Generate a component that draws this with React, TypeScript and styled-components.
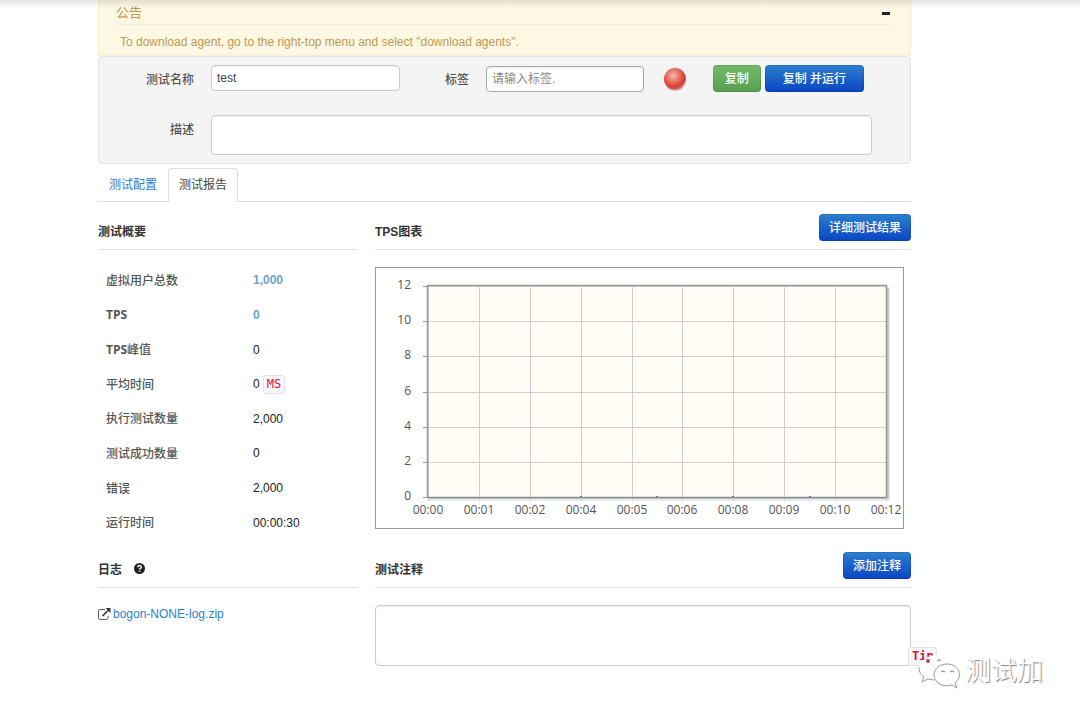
import React from "react";
import styled, { createGlobalStyle, css } from "styled-components";

const sans = `"Liberation Sans", "Noto Sans CJK SC", sans-serif`;
const humanist = `"Open Sans", "Noto Sans CJK SC", sans-serif`;

const GlobalStyle = createGlobalStyle`
  *, *::before, *::after { box-sizing: border-box; }
  body { margin: 0; background: #fff; color: #333; font: 12px/20px ${sans}; }
  button, input, textarea { font: inherit; }
`;

const Page = styled.div`
  position: relative;
  padding: 0 169px 32px 98px;
`;

const NavShadow = styled.div`
  position: absolute;
  inset: 0 0 auto;
  height: 8px;
  background: linear-gradient(rgba(0, 0, 0, 0.1), rgba(0, 0, 0, 0));
`;

const Notice = styled.section`
  padding: 2px 17px;
  height: 56px;
  background: #fcf8e3;
  border: 1px solid #fbeed5;
  border-width: 0 1px 1px;
  color: #c09853;
`;

const NoticeHead = styled.div`
  display: flex;
  align-items: center;
  justify-content: space-between;
  height: 23px;
  border-bottom: 1px solid #eee;
`;

const NoticeTitle = styled.h1`
  margin: 0;
  font-size: 13px;
  font-weight: 400;
`;

const Collapse = styled.button`
  display: flex;
  padding: 4px 3px 4px 4px;
  border: 0;
  background: none;
`;

const NoticeText = styled.p`
  margin: 7px 4px 0;
`;

const Well = styled.form`
  display: grid;
  row-gap: 23px;
  padding: 8px 38px 8px 12px;
  background: #f4f4f4;
  border: 1px solid #e3e3e3;
  border-radius: 4px;
`;

const FormRow = styled.div`
  display: flex;
  align-items: flex-start;
`;

const Label = styled.label<{ $width: number }>`
  flex: none;
  width: ${(p) => p.$width}px;
  padding-top: 5px;
  margin-right: 17px;
  color: #555;
  font-weight: 500;
  text-align: right;
`;

const field = css`
  min-width: 0;
  border: 1px solid #ccc;
  border-radius: 4px;
  background: #fff;
  color: #444;
  box-shadow: inset 0 1px 1px rgba(0, 0, 0, 0.07);
`;

const TextInput = styled.input<{ $grow: number; $dark?: boolean }>`
  ${field}
  flex: ${(p) => p.$grow} 1 0;
  height: 26px;
  padding: 0 5px;
  ${(p) => p.$dark && "border-color: #aaa; margin-top: 1px;"}
  &::placeholder { color: #888; opacity: 1; }
`;

const TextArea = styled.textarea<{ $height: number }>`
  ${field}
  display: block;
  flex: 1;
  width: 100%;
  height: ${(p) => p.$height}px;
  resize: none;
`;

const Ball = styled.svg`
  flex: none;
  margin: 2px 26px 0 19px;
`;

const Button = styled.button<{ $tone?: "green"; $pad?: number }>`
  flex: none;
  height: 27px;
  padding: 0 ${(p) => p.$pad ?? 9}px;
  border: 1px solid rgba(0, 0, 0, 0.1);
  border-radius: 4px;
  background: ${(p) =>
    p.$tone === "green"
      ? "linear-gradient(#74b96a, #57a04f)"
      : "linear-gradient(#2d7fcd, #0a45c4)"} border-box;
  color: #fff;
  font-weight: 500;
  white-space: nowrap;
`;

const Actions = styled.div`
  display: flex;
  flex: none;
  gap: 4px;
  margin-right: 8px;
`;

const Tabs = styled.nav`
  display: flex;
  margin-top: 4px;
  border-bottom: 1px solid #ddd;
`;

const Tab = styled.a<{ $active?: boolean }>`
  height: 33px;
  padding: 6px 10px;
  border-radius: 4px 4px 0 0;
  border: 1px solid transparent;
  border-bottom: 0;
  color: #2a7fc9;
  text-decoration: none;
  ${(p) =>
    p.$active &&
    css`
      height: 34px;
      margin-bottom: -1px;
      border-color: #ddd;
      background: #fff;
      color: #444;
    `}
`;

const Columns = styled.main`
  display: grid;
  grid-template-columns: minmax(0, 260fr) minmax(0, 536fr);
  column-gap: 17px;
`;

const Head = styled.header`
  display: flex;
  align-items: flex-end;
  height: 48px;
  border-bottom: 1px solid #e2e2e2;
  ${Button} { margin: 0 0 8px auto; }
`;

const Title = styled.h2`
  margin: 0 0 7px;
  font-size: 12px;
  font-weight: 700;
  line-height: 20px;
`;

const Help = styled.svg`
  margin: 0 0 13px 12px;
`;

const Summary = styled.table`
  width: 100%;
  height: 277px;
  margin-top: 13px;
  border-collapse: collapse;
  th {
    width: 155px;
    padding: 1px 0 0 8px;
    color: #555;
    font-family: ${humanist};
    font-weight: 500;
    text-align: left;
  }
  th b { font-weight: 700; }
  td { padding: 0; color: #222; }
`;

const Value = styled.span<{ $strong?: boolean }>`
  ${(p) => p.$strong && "color: #6aa5cb; font-weight: 700;"}
`;

const Code = styled.code`
  display: inline-block;
  margin-left: 3px;
  padding: 0 3px;
  border: 1px solid #e1e1e8;
  border-radius: 3px;
  background: #f7f7f9;
  color: #d14;
  font: 12px/17px "DejaVu Sans Mono", monospace;
`;

const Chart = styled.svg`
  display: block;
  width: calc(100% - 7px);
  margin-top: 17px;
  font: 12px ${humanist};
  fill: #555;
`;

const LogLink = styled.a`
  display: flex;
  align-items: center;
  gap: 2px;
  margin-top: 16px;
  color: #2a7fc9;
  text-decoration: none;
`;

const CommentBox = styled.div`
  position: relative;
  margin-top: 17px;
`;

const Tip = styled(Code)`
  position: absolute;
  right: -26px;
  bottom: 0;
  width: 29px;
  font-weight: 700;
`;

const Watermark = styled.div`
  position: absolute;
  left: calc(100% + 6px);
  top: 43px;
  display: flex;
  align-items: center;
  gap: 4px;
  color: #fff;
  font-size: 26px;
  font-weight: 300;
  line-height: 46px;
  white-space: nowrap;
  text-shadow: 1px 1px 1px #777;
`;

const rows: { label: React.ReactNode; value: string; strong?: boolean; unit?: string }[] = [
  { label: "虚拟用户总数", value: "1,000", strong: true },
  { label: <b>TPS</b>, value: "0", strong: true },
  { label: <><b>TPS</b>峰值</>, value: "0" },
  { label: "平均时间", value: "0", unit: "MS" },
  { label: "执行测试数量", value: "2,000" },
  { label: "测试成功数量", value: "0" },
  { label: "错误", value: "2,000" },
  { label: "运行时间", value: "00:00:30" },
];

const times = ["00:00", "00:01", "00:02", "00:04", "00:05", "00:06", "00:08", "00:09", "00:10", "00:12"];
const levels = [12, 10, 8, 6, 4, 2, 0];
const gridX = (i: number) => 53 + Math.round((i * 458) / 9);
const gridY = (i: number) => 19 + Math.round((i * 211) / 6);

function TpsChart() {
  return (
    <Chart viewBox="0 0 529 262" role="img" aria-label="TPS">
      <rect x="0.5" y="0.5" width="528" height="261" fill="#fff" stroke="#999" />
      <rect x="54" y="21" width="461" height="213" rx="1" fill="#000" opacity="0.08" />
      <rect x="54" y="20" width="460" height="212" rx="1" fill="#000" opacity="0.14" />
      <rect x="53" y="19" width="458" height="211" fill="#fffdf6" />
      {times.map((t, i) => (
        <g key={t}>
          <path d={`M${gridX(i) + 0.5} 19V234`} stroke="#d0d0d0" />
          <text x={gridX(i)} y="247" textAnchor="middle">{t}</text>
        </g>
      ))}
      {levels.map((n, i) => (
        <g key={n}>
          <path d={`M53 ${gridY(i) + 0.5}H511`} stroke="#d0d0d0" />
          <path d={`M48 ${gridY(i) + 0.5}H53`} stroke="#999" />
          <text x="36" y={gridY(i) + 3} textAnchor="end">{n}</text>
        </g>
      ))}
      <rect x="52.5" y="18.5" width="459" height="212" fill="none" stroke="#999" strokeWidth="1.5" />
      <path d="M53 230.5H511" stroke="#7e9097" />
      <path d="M205 229.5h2M281 229.5h2M357 229.5h2M434 229.5h2" stroke="#607a80" />
    </Chart>
  );
}

export default function App() {
  return (
    <Page>
      <GlobalStyle />
      <NavShadow />
      <Notice>
        <NoticeHead>
          <NoticeTitle>公告</NoticeTitle>
          <Collapse type="button" aria-label="Collapse">
            <svg width="8" height="3"><rect width="8" height="3" fill="#222" /></svg>
          </Collapse>
        </NoticeHead>
        <NoticeText>To download agent, go to the right-top menu and select "download agents".</NoticeText>
      </Notice>

      <Well onSubmit={(e) => e.preventDefault()}>
        <FormRow>
          <Label htmlFor="name" $width={83}>测试名称</Label>
          <TextInput id="name" $grow={191} defaultValue="test" />
          <Label htmlFor="tags" $width={69}>标签</Label>
          <TextInput id="tags" $grow={157} $dark placeholder="请输入标签." />
          <Ball width="24" height="25" viewBox="0 0 24 25">
            <defs>
              <radialGradient id="ball" cx="0.42" cy="0.35" r="0.65">
                <stop offset="0" stopColor="#f6b9b2" />
                <stop offset="0.5" stopColor="#e4695f" />
                <stop offset="0.8" stopColor="#d93a33" />
                <stop offset="1" stopColor="#c77a74" />
              </radialGradient>
            </defs>
            <ellipse cx="12" cy="21" rx="8" ry="3" fill="#000" opacity="0.15" />
            <circle cx="12" cy="12" r="11" fill="url(#ball)" />
          </Ball>
          <Actions>
            <Button type="button" $tone="green" $pad={11}>复制</Button>
            <Button type="submit" $pad={17}>复制 并运行</Button>
          </Actions>
        </FormRow>
        <FormRow>
          <Label htmlFor="description" $width={83}>描述</Label>
          <TextArea id="description" $height={40} />
        </FormRow>
      </Well>

      <Tabs>
        <Tab href="#config">测试配置</Tab>
        <Tab href="#report" $active>测试报告</Tab>
      </Tabs>

      <Columns>
        <section>
          <Head><Title>测试概要</Title></Head>
          <Summary>
            <tbody>
              {rows.map((r, i) => (
                <tr key={i}>
                  <th scope="row">{r.label}</th>
                  <td>
                    <Value $strong={r.strong}>{r.value}</Value>
                    {r.unit && <Code>{r.unit}</Code>}
                  </td>
                </tr>
              ))}
            </tbody>
          </Summary>
        </section>
        <section>
          <Head>
            <Title>TPS图表</Title>
            <Button type="button">详细测试结果</Button>
          </Head>
          <TpsChart />
        </section>
        <section>
          <Head>
            <Title>日志</Title>
            <Help width="11" height="11" viewBox="0 0 11 11">
              <circle cx="5.5" cy="5.5" r="5.5" fill="#222" />
              <path d="M3.7 4.3C3.7 2 7.3 2 7.3 4.2C7.3 5.4 5.6 5.2 5.6 6.5M5.6 7.4V8.8" fill="none" stroke="#fff" strokeWidth="1.4" />
            </Help>
          </Head>
          <LogLink href="#log">
            <svg width="13" height="12" viewBox="0 0 13 12" fill="none" stroke="#555">
              <path d="M7 1.5H2.2Q0.5 1.5 0.5 3.2V9.8Q0.5 11.5 2.2 11.5H8.3Q10 11.5 10 9.8V8" />
              <path d="M4.5 8L10 2.5" stroke="#333" strokeWidth="1.6" />
              <path d="M7.5 0H12.5V5Z" fill="#333" stroke="none" />
            </svg>
            bogon-NONE-log.zip
          </LogLink>
        </section>
        <section>
          <Head>
            <Title as="label" htmlFor="comment">测试注释</Title>
            <Button type="button">添加注释</Button>
          </Head>
          <CommentBox>
            <TextArea id="comment" $height={61} />
            <Tip>Tip</Tip>
            <Watermark>
              <svg width="44" height="38" viewBox="0 0 44 38" fill="#fff" stroke="#999">
                <path d="M19 3C11 3 3 9 2 15C2 19 3 22 7 25L5 30L11 27C22 30 32 23 32 15C32 8 27 3 19 3Z" stroke="none" />
                <path d="M2 15C2 19 3 22 7 25L5 30L11 27L17 28" fill="none" />
                <path d="M30 12C22 12 17 17 17 23C17 30 25 36 35 33L40 36L38 31C46 25 43 12 30 12Z" />
                <path d="M20 9q2-3 4 0M24 20q2-2 4 0M33 20q2-2 4 0" fill="none" stroke="#777" />
                <circle cx="11" cy="9" r="2" fill="#b04860" stroke="none" />
              </svg>
              测试加
            </Watermark>
          </CommentBox>
        </section>
      </Columns>
    </Page>
  );
}
